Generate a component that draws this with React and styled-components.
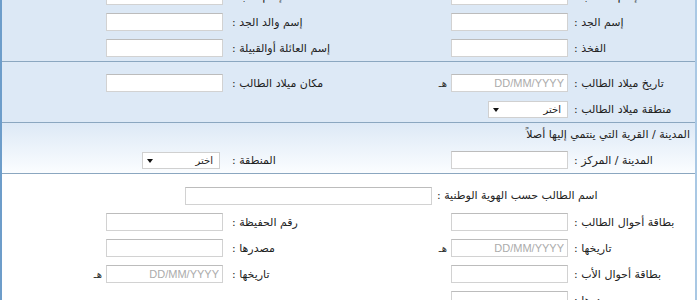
import styled, { createGlobalStyle } from 'styled-components';

const GlobalStyle = createGlobalStyle`
  body {
    margin: 0;
    background: #fff;
  }
`;

const Form = styled.div`
  direction: rtl;
  box-sizing: border-box;
  width: 697px;
  margin-top: -17px;
  border-left: 2px solid #6d9dca;
  border-right: 2px solid #a9c8e4;
  font-family: "DejaVu Sans", "Noto Sans", sans-serif;
  font-size: 11px;
  color: #222;
`;

const Section = styled.section`
  background: ${(p) => p.$bg || '#dce8f5'};
  padding-top: ${(p) => p.$pad || 0}px;
  border-top: ${(p) => (p.$line ? '1px solid #8ba7c0' : 'none')};
`;

const Row = styled.div`
  display: grid;
  grid-template-columns: 127px 237px 108px 1fr;
  align-items: center;
  height: ${(p) => p.$h || 26}px;
`;

const Label = styled.label`
  text-align: left;
  padding-left: ${(p) => p.$gap}px;
  white-space: nowrap;
`;

const Field = styled.div`
  display: flex;
  align-items: center;
  gap: 4px;
`;

const Input = styled.input`
  box-sizing: border-box;
  width: ${(p) => p.$w || 117}px;
  height: 18px;
  margin: 0;
  padding: 0 3px;
  border: 1px solid #d2d2d2;
  border-top-color: #bcbcbc;
  background: #fff;
  font-family: "Liberation Sans", Arial, sans-serif;
  font-size: 11px;
  color: #333;

  &::placeholder {
    color: #ababab;
  }
`;

const Hijri = styled.span`
  font-size: 10px;
  color: #333;
`;

const SelectBox = styled.div`
  position: relative;
  width: ${(p) => p.$w}px;
  margin-right: ${(p) => p.$inset || 0}px;

  &::after {
    content: '';
    position: absolute;
    left: 5px;
    top: 7px;
    border-left: 3px solid transparent;
    border-right: 3px solid transparent;
    border-top: 4px solid #111;
    pointer-events: none;
  }
`;

const Select = styled.select`
  appearance: none;
  box-sizing: border-box;
  width: 100%;
  height: 17px;
  margin: 0;
  padding: 0 6px 0 14px;
  border: 1px solid #d0d0d0;
  background: #fff;
  font-family: "DejaVu Sans", sans-serif;
  font-size: 10px;
  color: #222;
`;

const Heading = styled.div`
  height: 24px;
  line-height: 24px;
  padding-right: 5px;
`;

const WideRow = styled.div`
  display: flex;
  align-items: center;
  height: 27px;
`;

const WideLabel = styled.label`
  width: 263px;
  text-align: left;
  padding-left: 5px;
  box-sizing: border-box;
  white-space: nowrap;
`;

const TextField = ({ date, w }) => (
  <Field>
    <Input $w={w} placeholder={date ? 'DD/MM/YYYY' : ''} />
    {date && <Hijri>هـ</Hijri>}
  </Field>
);

const Dropdown = ({ w, inset }) => (
  <Field>
    <SelectBox $w={w} $inset={inset}>
      <Select defaultValue="">
        <option value="">اختر</option>
      </Select>
    </SelectBox>
  </Field>
);

export default function App() {
  return (
    <>
      <GlobalStyle />
      <Form>
        <Section>
          <Row>
            <Label $gap={6}>إسم الطالب :</Label>
            <TextField />
            <Label $gap={9}>إسم الأب :</Label>
            <TextField />
          </Row>
          <Row>
            <Label $gap={6}>إسم الجد :</Label>
            <TextField />
            <Label $gap={9}>إسم والد الجد :</Label>
            <TextField />
          </Row>
          <Row>
            <Label $gap={6}>الفخذ :</Label>
            <TextField />
            <Label $gap={9}>إسم العائلة أوالقبيلة :</Label>
            <TextField />
          </Row>
        </Section>

        <Section $line $pad={8} $bg="#dde9f6">
          <Row>
            <Label $gap={6}>تاريخ ميلاد الطالب :</Label>
            <TextField date />
            <Label $gap={9}>مكان ميلاد الطالب :</Label>
            <TextField />
          </Row>
          <Row>
            <Label $gap={6}>منطقة ميلاد الطالب :</Label>
            <Dropdown w={80} />
          </Row>
        </Section>

        <Section $line $bg="linear-gradient(to bottom, #dde9f6, #fbfdff)">
          <Heading>المدينة / القرية التي ينتمي إليها أصلاً</Heading>
          <Row>
            <Label $gap={6}>المدينة / المركز :</Label>
            <TextField />
            <Label $gap={9}>المنطقة :</Label>
            <Dropdown w={78} inset={3} />
          </Row>
        </Section>

        <Section $line $pad={8} $bg="#fff">
          <WideRow>
            <WideLabel>اسم الطالب حسب الهوية الوطنية :</WideLabel>
            <Input $w={247} />
          </WideRow>
          <Row>
            <Label $gap={6}>بطاقة أحوال الطالب :</Label>
            <TextField />
            <Label $gap={9}>رقم الحفيظة :</Label>
            <TextField />
          </Row>
          <Row>
            <Label $gap={6}>تاريخها :</Label>
            <TextField date />
            <Label $gap={9}>مصدرها :</Label>
            <TextField />
          </Row>
          <Row>
            <Label $gap={6}>بطاقة أحوال الأب :</Label>
            <TextField />
            <Label $gap={9}>تاريخها :</Label>
            <TextField date />
          </Row>
          <Row>
            <Label $gap={6}>مصدرها :</Label>
            <TextField />
          </Row>
        </Section>
      </Form>
    </>
  );
}
